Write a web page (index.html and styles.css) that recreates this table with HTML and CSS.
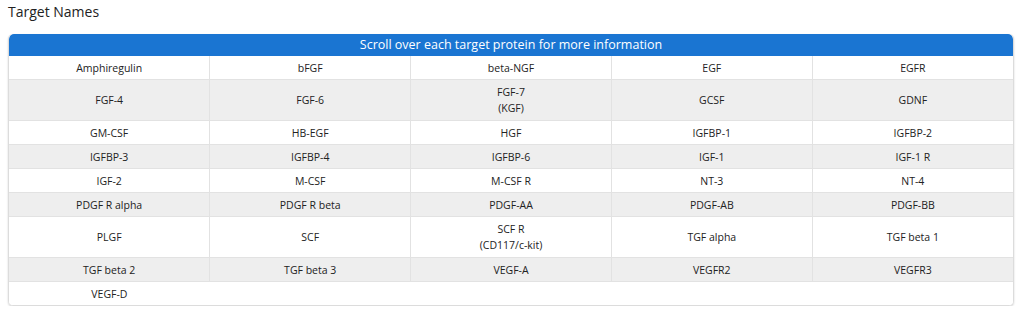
FILE: index.html
```html
<!DOCTYPE html>
<html>
<head>
<meta charset="utf-8">
<link rel="stylesheet" href="styles.css">
</head>
<body>
<h3 class="title">Target Names</h3>
<div class="panel">
  <div class="panel-head">Scroll over each target protein for more information</div>
  <table class="targets">
    <tr><td>Amphiregulin</td><td>bFGF</td><td>beta-NGF</td><td>EGF</td><td>EGFR</td></tr>
    <tr class="tall"><td>FGF-4</td><td>FGF-6</td><td>FGF-7<br>(KGF)</td><td>GCSF</td><td>GDNF</td></tr>
    <tr><td>GM-CSF</td><td>HB-EGF</td><td>HGF</td><td>IGFBP-1</td><td>IGFBP-2</td></tr>
    <tr><td>IGFBP-3</td><td>IGFBP-4</td><td>IGFBP-6</td><td>IGF-1</td><td>IGF-1 R</td></tr>
    <tr><td>IGF-2</td><td>M-CSF</td><td>M-CSF R</td><td>NT-3</td><td>NT-4</td></tr>
    <tr><td>PDGF R alpha</td><td>PDGF R beta</td><td>PDGF-AA</td><td>PDGF-AB</td><td>PDGF-BB</td></tr>
    <tr class="tall"><td>PLGF</td><td>SCF</td><td>SCF R<br>(CD117/c-kit)</td><td>TGF alpha</td><td>TGF beta 1</td></tr>
    <tr><td>TGF beta 2</td><td>TGF beta 3</td><td>VEGF-A</td><td>VEGFR2</td><td>VEGFR3</td></tr>
    <tr class="last"><td class="solo">VEGF-D</td><td class="empty" colspan="4"></td></tr>
  </table>
</div>
</body>
</html>
```

FILE: styles.css
```css
html, body {
  margin: 0;
  padding: 0;
  background: #fff;
}
body {
  padding: 0 8px;
  font-family: "Open Sans", "Noto Sans", sans-serif;
  color: #222;
}
.title {
  margin: 0;
  padding-top: 2px;
  height: 32px;
  font-size: 14px;
  font-weight: 500;
  line-height: 20px;
  color: #222;
}
.panel {
  width: 1006px;
  border: 1px solid #dcdcdc;
  border-top: none;
  border-radius: 5px;
  box-shadow: 0 1px 2px rgba(0,0,0,0.18);
  overflow: hidden;
  box-sizing: border-box;
}
.panel-head {
  background: #1a75d2;
  color: #fff;
  text-align: center;
  font-size: 12.5px;
  height: 22px;
  line-height: 22px;
  border-radius: 5px 5px 0 0;
}
.targets {
  width: 100%;
  border-collapse: collapse;
  table-layout: fixed;
  font-size: 10.5px;
  color: #222;
}
.targets td {
  text-align: center;
  line-height: 16px;
  height: 16px;
  padding: 3.5px 4px;
  border-right: 1px solid #e2e2e2;
  border-bottom: 1px solid #e2e2e2;
}
.targets tr.tall td {
  padding: 4px 4px;
}
.targets td:last-child {
  border-right: none;
}
.targets tr:nth-child(even) td {
  background: #eeeeee;
}
.targets tr:nth-child(odd) td {
  background: #fff;
}
.targets tr.last td {
  border-bottom: none;
  border-right: none;
}
```
